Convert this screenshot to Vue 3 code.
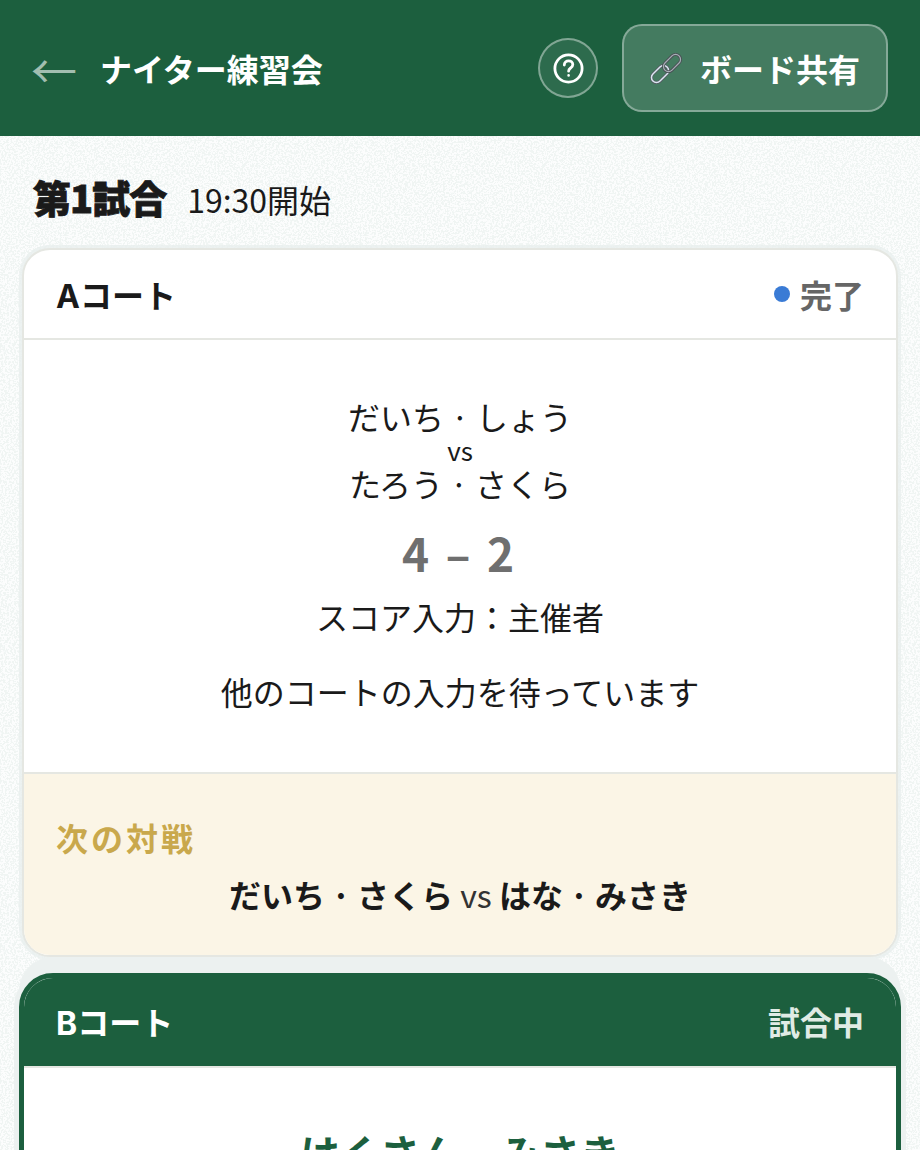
<template>
  <div class="page">
    <header class="topbar">
      <span class="back">←</span>
      <h1 class="event-title">ナイター練習会</h1>
      <button class="help-btn" aria-label="ヘルプ">
        <svg width="32" height="32" viewBox="0 0 32 32" fill="none" stroke="#fff" stroke-width="2.8" stroke-linecap="round">
          <circle cx="16.5" cy="16.5" r="13.6" />
          <path d="M12.3 13c0-2.5 1.9-4.1 4.3-4.1 2.4 0 4.2 1.5 4.2 3.6 0 1.7-.9 2.6-2.2 3.5-1.3.9-2 1.6-2 3.2" />
          <circle cx="16.6" cy="23.4" r="0.7" fill="#fff" stroke-width="1.2" />
        </svg>
      </button>
      <button class="share-btn">
        <svg class="link-icon" width="36" height="34" viewBox="0 0 36 34" fill="none">
          <rect x="2" y="18" width="20" height="10" rx="5" transform="rotate(-45 12 23)" stroke="#565c63" stroke-width="3" />
          <rect x="2" y="18" width="20" height="10" rx="5" transform="rotate(-45 12 23)" stroke="#dbe7f2" stroke-width="1.5" />
          <rect x="14" y="7" width="20" height="10" rx="5" transform="rotate(-45 24 12)" stroke="#4a4f55" stroke-width="3" />
          <rect x="14" y="7" width="20" height="10" rx="5" transform="rotate(-45 24 12)" stroke="#a6afb6" stroke-width="1.2" />
        </svg>
        <span>ボード共有</span>
      </button>
    </header>

    <main class="content">
      <div class="round-head">
        <h2 class="round-title">第1試合</h2>
        <span class="round-time">19:30開始</span>
      </div>

      <section class="court done">
        <div class="court-head">
          <span class="court-name">Aコート</span>
          <span class="court-status"><i class="dot"></i>完了</span>
        </div>
        <div class="court-body">
          <div class="names">だいち<span class="sep">·</span>しょう</div>
          <div class="vs">vs</div>
          <div class="names">たろう<span class="sep">·</span>さくら</div>
          <div class="score">4 – 2</div>
          <div class="note">スコア入力：主催者</div>
          <div class="note waiting">他のコートの入力を待っています</div>
        </div>
        <div class="next">
          <div class="next-label">次の対戦</div>
          <div class="next-match"><b>だいち<span class="sep">·</span>さくら</b> vs <b>はな<span class="sep">·</span>みさき</b></div>
        </div>
      </section>

      <section class="court playing">
        <div class="court-head">
          <span class="court-name">Bコート</span>
          <span class="court-status">試合中</span>
        </div>
        <div class="court-body">
          <div class="names live">はくさん<span class="sep">·</span>みさき</div>
        </div>
      </section>
    </main>
  </div>
</template>

<script setup>
</script>

<style>
html, body {
  margin: 0;
  height: 1150px;
  overflow: hidden;
}
</style>

<style scoped>
.page {
  height: 1150px;
  overflow: hidden;
  font-family: "Noto Sans CJK JP", "Noto Sans", sans-serif;
  color: #1a1a1a;
  background-color: #fcfdfd;
  background-image: url("data:image/svg+xml,%3Csvg xmlns='http://www.w3.org/2000/svg' width='300' height='300'%3E%3Cfilter id='n'%3E%3CfeTurbulence type='fractalNoise' baseFrequency='0.55' numOctaves='2'/%3E%3CfeColorMatrix values='0 0 0 0 0.87 0 0 0 0 0.91 0 0 0 0 0.9 0 0 0 12 -5.6'/%3E%3C/filter%3E%3Crect width='300' height='300' filter='url(%23n)'/%3E%3C/svg%3E");
}

.topbar {
  height: 136px;
  box-sizing: border-box;
  padding: 24px 32px 24px 31px;
  background: #1c5f3e;
  display: flex;
  align-items: center;
  color: #fff;
}

.back {
  width: 46px;
  font-size: 46px;
  line-height: 1;
  color: rgba(255, 255, 255, 0.6);
  margin-right: 23px;
}

.event-title {
  margin: 0;
  flex: 1;
  font-size: 32px;
  font-weight: 700;
  line-height: 1.4;
}

.help-btn {
  width: 60px;
  height: 60px;
  padding: 0;
  margin-right: 24px;
  border: 2px solid rgba(255, 255, 255, 0.4);
  border-radius: 50%;
  background: rgba(255, 255, 255, 0.08);
  display: flex;
  align-items: center;
  justify-content: center;
}

.share-btn {
  width: 266px;
  height: 88px;
  box-sizing: border-box;
  padding: 0 0 0 24px;
  border: 2px solid rgba(255, 255, 255, 0.35);
  border-radius: 20px;
  background: rgba(255, 255, 255, 0.18);
  color: #fff;
  font-family: inherit;
  font-size: 32px;
  font-weight: 700;
  display: flex;
  align-items: center;
  gap: 16px;
}

.content {
  padding: 0 19px;
}

.round-head {
  height: 112px;
  box-sizing: border-box;
  padding: 33px 14px 0;
  display: flex;
  align-items: baseline;
  gap: 21px;
}

.round-title {
  margin: 0;
  font-size: 38px;
  font-weight: 900;
  line-height: 56px;
  letter-spacing: -1px;
  -webkit-text-stroke: 0.8px #1a1a1a;
}

.round-time {
  font-size: 32px;
  line-height: 56px;
}

.court {
  margin: 0 3px;
  border: 2px solid #e5e7e2;
  border-radius: 28px;
  background: #fff;
  box-shadow: 0 0 0 3px rgba(233, 239, 238, 0.8);
  overflow: hidden;
}

.court-head {
  height: 90px;
  box-sizing: border-box;
  padding: 0 32px;
  display: flex;
  align-items: center;
  justify-content: space-between;
  border-bottom: 2px solid #e5e7e2;
}

.court-name {
  font-family: Inter, "Noto Sans CJK JP", sans-serif;
  font-size: 32px;
  font-weight: 700;
}

.court-status {
  display: flex;
  align-items: center;
  gap: 10px;
  font-size: 32px;
  font-weight: 700;
  color: #666;
}

.dot {
  width: 16px;
  height: 16px;
  border-radius: 50%;
  background: #3a7bd5;
}

.court-body {
  height: 432px;
  box-sizing: border-box;
  padding-top: 54px;
  text-align: center;
}

.names {
  font-size: 32px;
  line-height: 44px;
}

.sep {
  display: inline-block;
  width: 1em;
  text-align: center;
}

.vs {
  font-size: 26px;
  line-height: 23px;
}

.score {
  margin-top: 11px;
  padding-right: 4px;
  font-size: 46px;
  font-weight: 700;
  line-height: 72px;
  word-spacing: 6px;
  color: #6f6f6f;
}

.note {
  margin-top: 4px;
  font-size: 32px;
  line-height: 48px;
}

.waiting {
  margin-top: 27px;
}

.next {
  height: 183px;
  box-sizing: border-box;
  padding: 39px 32px 0;
  background: #fbf5e6;
  border-top: 2px solid #e5e7e2;
}

.next-label {
  font-size: 32px;
  font-weight: 700;
  line-height: 48px;
  letter-spacing: 3px;
  color: #c9a84c;
}

.next-match {
  margin-top: 9px;
  font-size: 32px;
  line-height: 48px;
  text-align: center;
  color: #333;
}

.next-match b {
  font-weight: 700;
  color: #1a1a1a;
}

.court.playing {
  margin: 16px 0 0;
  border: 5px solid #1c5f3e;
  border-radius: 34px;
  box-shadow: 0 0 0 5px #ecf1f0, 0 -16px 0 0 #ecf1f0;
}

.playing .court-head {
  padding-bottom: 2px;
  background: #1c5f3e;
  color: #fff;
}

.playing .court-status {
  color: #e0ebe5;
}

.playing .court-body {
  padding-top: 54px;
}

.live {
  font-size: 40px;
  font-weight: 700;
  line-height: 60px;
  color: #1c5f3e;
}
</style>
